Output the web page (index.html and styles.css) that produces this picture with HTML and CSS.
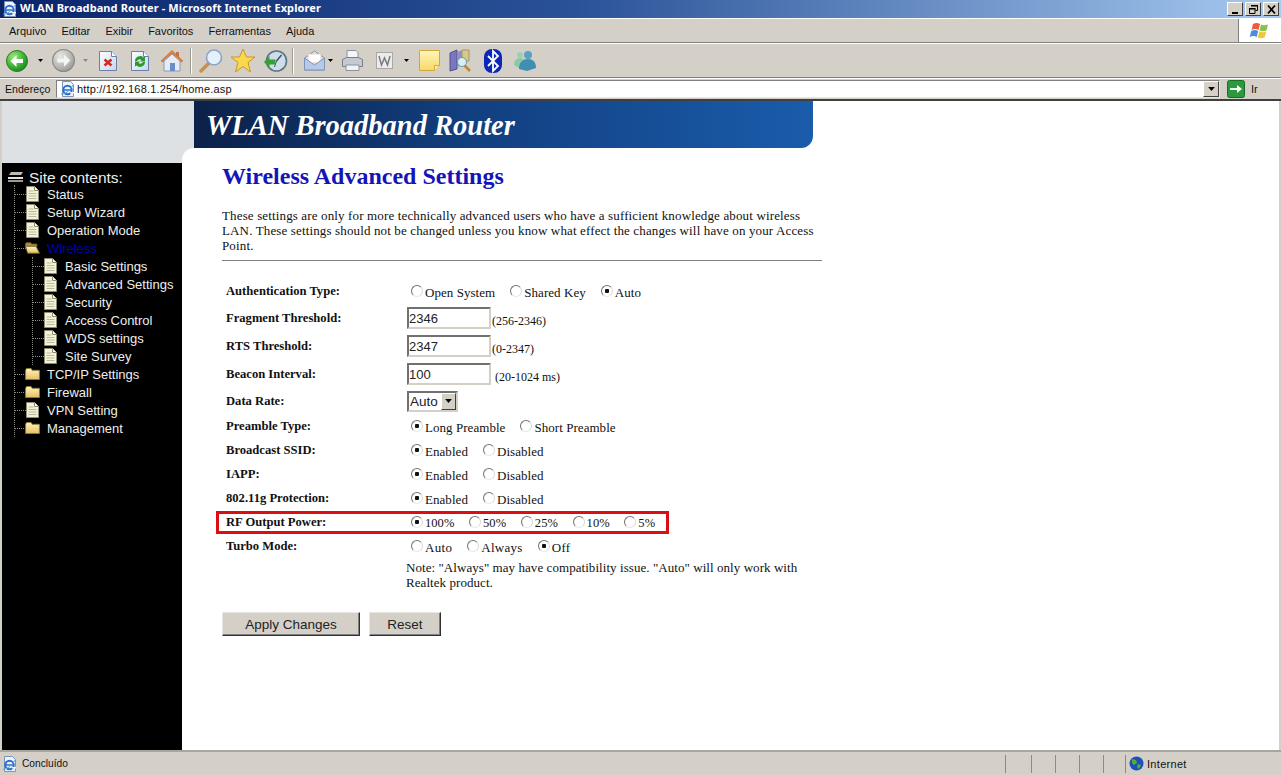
FILE: index.html
```html
<!DOCTYPE html>
<html lang="pt">
<head>
    <meta charset="UTF-8">
    <title>WLAN Broadband Router - Microsoft Internet Explorer</title>
    <link rel="stylesheet" href="styles.css">
</head>
<body>
<svg class="defs" width="0" height="0">
    <defs>
        <radialGradient id="gGreen" cx=".35" cy=".3" r=".8"><stop offset="0" stop-color="#9ce87c"/><stop offset=".6" stop-color="#3cb034"/><stop offset="1" stop-color="#14801a"/></radialGradient>
        <radialGradient id="gGrey" cx=".35" cy=".3" r=".8"><stop offset="0" stop-color="#e8e8e4"/><stop offset=".7" stop-color="#b0b0ac"/><stop offset="1" stop-color="#8f8f8b"/></radialGradient>
        <linearGradient id="gPage" x1="0" y1="0" x2="1" y2="1"><stop offset="0" stop-color="#ffffff"/><stop offset="1" stop-color="#c5d5ee"/></linearGradient>
        <linearGradient id="gNote" x1="0" y1="0" x2="0" y2="1"><stop offset="0" stop-color="#fff6b8"/><stop offset="1" stop-color="#f7d868"/></linearGradient>
        <linearGradient id="gFolder" x1="0" y1="0" x2="0" y2="1"><stop offset="0" stop-color="#fff4c0"/><stop offset="1" stop-color="#e8c060"/></linearGradient>
        <symbol id="tree-doc" viewBox="0 0 13 16">
            <path d="M.5.5h8l4 4v11H.5z" fill="#f5f2d8" stroke="#8a8a70"/>
            <path d="M8.500.5v4h4" fill="#fff" stroke="#8a8a70"/>
            <path d="M2.500 5h5M2.500 7.500h8M2.500 10h8M2.500 12.500h8" stroke="#b8b89c"/>
        </symbol>
        <symbol id="tree-folder" viewBox="0 0 16 13">
            <path d="M.5 2.500l1-2h5l1 2h8v10H.5z" fill="url(#gFolder)" stroke="#8a7a3c"/>
        </symbol>
        <symbol id="tree-open" viewBox="0 0 17 13">
            <path d="M.5 2l1-1.500h5l1 1.500h6v3H.5z" fill="#a89048" stroke="#6a5c28"/>
            <path d="M.5 4.500h12l4 8H3z" fill="url(#gFolder)" stroke="#6a5c28"/>
        </symbol>
        <symbol id="ie-page" viewBox="0 0 16 16">
            <path d="M2.500.5h8l3 3v12h-11z" fill="#eef3fb" stroke="#7f93b5"/>
            <circle cx="7.500" cy="9" r="4.200" fill="none" stroke="#2a6fd0" stroke-width="2"/>
            <path d="M3.500 9h8" stroke="#2a6fd0" stroke-width="1.500"/>
            <path d="M10 11h4v1.500h-4z" fill="#eef3fb"/>
            <path d="M1 13c3 1 9-3 12-9" fill="none" stroke="#5fa0e8"/>
        </symbol>
        <symbol id="drop-arrow" viewBox="0 0 5 3"><path d="M0 0h5L2.500 3z"/></symbol>
    </defs>
</svg>

<div class="window">
    <div class="titlebar">
        <svg width="16" height="16"><use href="#ie-page"/></svg>
        <span class="title-text">WLAN Broadband Router - Microsoft Internet Explorer</span>
        <div class="win-buttons">
            <span class="win-btn"><svg width="13" height="11"><path d="M3 8h6v2H3z"/></svg></span>
            <span class="win-btn"><svg width="13" height="11"><path d="M4.500 1.500h6v5h-2M2.500 4.500h5.500v5h-5.500z" fill="none" stroke="#000"/><path d="M4 1h7v1.500H4zM2 4h6.500v1.500H2z"/></svg></span>
            <span class="win-btn"><svg width="13" height="11"><path d="M3 1.500l7 8M10 1.500l-7 8" stroke="#000" stroke-width="1.800"/></svg></span>
        </div>
    </div>

    <div class="menubar">
        <nav class="menu">
            <span>Arquivo</span><span>Editar</span><span>Exibir</span><span>Favoritos</span><span>Ferramentas</span><span>Ajuda</span>
        </nav>
        <div class="flag-box">
            <svg width="22" height="20" viewBox="0 0 22 20">
                <path d="M4 3c3-1.500 5-1 7 0l-1.500 6c-2-1-4-1.500-7 0z" fill="#e8603a"/>
                <path d="M12 3.500c2 1 4 1 7 0L17.500 9.500c-3 1-5 1-7 0z" fill="#8cc04c"/>
                <path d="M2.200 10c3-1.500 5-1 7 0L7.700 16c-2-1-4-1.500-7 0z" fill="#4c8ce0"/>
                <path d="M10.200 10.500c2 1 4 1 7 0L15.700 16.500c-3 1-5 1-7 0z" fill="#f0c838"/>
            </svg>
        </div>
    </div>

    <div class="toolbar">
        <span class="tool"><svg width="22" height="22" viewBox="0 0 22 22"><circle cx="11" cy="11" r="10.500" fill="url(#gGreen)" stroke="#2a7a24"/><path d="M4.500 11l6-6v4H17v4h-6.500v4z" fill="#fff"/></svg></span>
        <span class="arrow arrow-a"><svg width="5" height="3"><use href="#drop-arrow"/></svg></span>
        <span class="tool"><svg width="23" height="23" viewBox="0 0 22 22"><circle cx="11" cy="11" r="10.500" fill="url(#gGrey)" stroke="#8a8a86"/><path d="M17.500 11l-6-6v4H5v4h6.500v4z" fill="#f4f4f2"/></svg></span>
        <span class="arrow arrow-b"><svg width="5" height="3" fill="#8a8a86"><use href="#drop-arrow"/></svg></span>
        <span class="tool"><svg width="20" height="22" viewBox="0 0 20 22"><path d="M1.500 1.500h12l5 5v14h-17z" fill="url(#gPage)" stroke="#6a80a8"/><path d="M13.500 1.500v5h5" fill="#fff" stroke="#6a80a8"/><path d="M6.500 9.500l7 6M13.500 9.500l-7 6" stroke="#d8281c" stroke-width="2.600"/></svg></span>
        <span class="tool"><svg width="20" height="22" viewBox="0 0 20 22"><path d="M1.500 1.500h12l5 5v14h-17z" fill="url(#gPage)" stroke="#6a80a8"/><path d="M13.500 1.500v5h5" fill="#fff" stroke="#6a80a8"/><path d="M5 11a5 5 0 0 1 8.500-3.500l1.500-1v5h-5l1.500-1.500A3 3 0 0 0 7 11z" fill="#2a9a2c"/><path d="M15 12a5 5 0 0 1-8.500 3.500l-1.500 1v-5h5l-1.500 1.500A3 3 0 0 0 13 12z" fill="#2a9a2c"/></svg></span>
        <span class="tool"><svg width="24" height="24" viewBox="0 0 24 24"><path d="M16 3h3v6h-3z" fill="#b87858"/><path d="M1 12L12 1.500 23 12l-2 1L12 5 3 13z" fill="#e8803a" stroke="#b8602c" stroke-width=".6"/><path d="M4 12l8-7 8 7v10H4z" fill="#e6ecf6" stroke="#8a9ab8"/><path d="M10 14h5v8h-5z" fill="#6a8cc8"/></svg></span>
        <span class="tool-sep tool-sep-a"></span>
        <span class="tool"><svg width="25" height="25" viewBox="0 0 25 25"><path d="M10 15L2 23" stroke="#c89048" stroke-width="3.500" stroke-linecap="round"/><circle cx="15" cy="9.500" r="7.500" fill="#e4f0fb" stroke="#8aa4c4" stroke-width="1.600"/></svg></span>
        <span class="tool"><svg width="26" height="25" viewBox="0 0 26 25"><path d="M13 1l3.500 8H25l-7 5.500L20.500 24 13 18.500 5.500 24 8 14.500 1 9h8.500z" fill="#fbd94c" stroke="#c8962c"/></svg></span>
        <span class="tool"><svg width="25" height="24" viewBox="0 0 25 24"><circle cx="13.500" cy="12" r="10" fill="#cfdde8" stroke="#5a7488" stroke-width="1.600"/><path d="M13.500 12l5-6" stroke="#3a5468" stroke-width="1.500"/><path d="M13.500 12l-2 6" stroke="#3a5468"/><path d="M1 13l5.500-6v3.500h6v5h-6V19z" fill="#38a032"/></svg></span>
        <span class="tool-sep tool-sep-b"></span>
        <span class="tool"><svg width="23" height="24" viewBox="0 0 23 24"><path d="M1.500 9L11.500 2l10 7v12h-20z" fill="#dfe6f5" stroke="#7f93b5"/><path d="M5 5h13v9H5z" fill="#fff" stroke="#d8b890" stroke-width=".6"/><path d="M1.500 9l10 7 10-7v12h-20z" fill="#b8c8ea" stroke="#7f93b5"/></svg></span>
        <span class="arrow arrow-c"><svg width="5" height="3"><use href="#drop-arrow"/></svg></span>
        <span class="tool"><svg width="23" height="23" viewBox="0 0 23 23"><path d="M6 1.500h9l2 2v6H6z" fill="#f4f6fa" stroke="#8a929e"/><path d="M1.500 10.500l4-2h12l4 2v7h-20z" fill="#c6cad0" stroke="#7a8088"/><path d="M5 16h13v5.500H5z" fill="#f2f2f2" stroke="#8a929e"/></svg></span>
        <span class="tool"><svg width="17" height="17" viewBox="0 0 17 17"><rect x=".5" y=".5" width="16" height="16" fill="#ececec" stroke="#a8a8a8"/><path d="M3 4l2.500 9L8.500 6l3 7L14 4" fill="none" stroke="#7c7c7c" stroke-width="1.500"/></svg></span>
        <span class="arrow arrow-d"><svg width="5" height="3"><use href="#drop-arrow"/></svg></span>
        <span class="tool"><svg width="23" height="23" viewBox="0 0 23 23"><path d="M1.500 1.500h20v15l-5 5h-15z" fill="url(#gNote)" stroke="#d4a838"/><path d="M16.500 21.500v-5h5" fill="#fff2a8" stroke="#d4a838"/></svg></span>
        <span class="tool"><svg width="24" height="24" viewBox="0 0 24 24"><path d="M1 4l7-3v19l-7 2z" fill="#7878c0" stroke="#50508c"/><path d="M8 3l6-2v12l-6 6z" fill="#9090c8"/><path d="M13 1h7v11h-7z" fill="#d8c890" stroke="#a89858"/><path d="M15 16l6 6" stroke="#b88838" stroke-width="2.500"/><circle cx="13" cy="13" r="4.500" fill="#d8f0f4" stroke="#6a98a8"/></svg></span>
        <span class="tool"><svg width="18" height="24" viewBox="0 0 18 24"><rect width="18" height="24" rx="8" fill="#0a28b8"/><path d="M4 7l10 10-5 5V2l5 5L4 17" fill="none" stroke="#fff" stroke-width="1.800"/></svg></span>
        <span class="tool"><svg width="26" height="22" viewBox="0 0 26 22"><circle cx="8" cy="5" r="3" fill="#9ccfb0"/><path d="M2 15c0-5 3-7 6-7s5 2 5 6l-6 4z" fill="#8cc8a8"/><circle cx="16" cy="5" r="4" fill="#5aa0c0"/><path d="M7 19c0-7 4-10 9-10s8 3 8 9l-9 3z" fill="#3f8fb0"/></svg></span>
    </div>

    <div class="addressbar">
        <span class="addr-label">Endereço</span>
        <div class="addr-box">
            <svg width="16" height="16"><use href="#ie-page"/></svg>
            <span class="addr-url">http://192.168.1.254/home.asp</span>
            <span class="addr-drop"><svg width="7" height="4" viewBox="0 0 5 3"><path d="M0 0h5L2.500 3z"/></svg></span>
        </div>
        <svg class="go-icon" width="18" height="18" viewBox="0 0 18 18"><rect x=".5" y=".5" width="17" height="17" rx="2" fill="#2a9a3c" stroke="#1a6a28"/><path d="M3 8h7V5l5 4-5 4v-3H3z" fill="#fff"/></svg>
        <span class="go-label">Ir</span>
    </div>

    <div class="page">
        <div class="head">
            <div class="head-blank"></div>
            <div class="banner">WLAN Broadband Router</div>
        </div>
        <div class="below">
            <aside class="sidebar">
                <div class="tree-root">
                    <svg width="16" height="13" viewBox="0 0 16 13"><path d="M3 1h12L13 4H1z" fill="#bdbdb4"/><path d="M0 6h15v2H0z" fill="#e4e4dc"/><path d="M0 9h15v2H0z" fill="#9a9a92"/></svg>
                    <span>Site contents:</span>
                </div>
                <ul class="tree">
                    <li><div class="node"><svg class="ico" width="13" height="16"><use href="#tree-doc"/></svg><span>Status</span></div></li>
                    <li><div class="node"><svg class="ico" width="13" height="16"><use href="#tree-doc"/></svg><span>Setup Wizard</span></div></li>
                    <li><div class="node"><svg class="ico" width="13" height="16"><use href="#tree-doc"/></svg><span>Operation Mode</span></div></li>
                    <li>
                        <div class="node node-active"><svg class="ico ico-open" width="15" height="12"><use href="#tree-open"/></svg><span>Wireless</span></div>
                        <ul class="tree tree-sub">
                            <li><div class="node"><svg class="ico" width="13" height="16"><use href="#tree-doc"/></svg><span>Basic Settings</span></div></li>
                            <li><div class="node"><svg class="ico" width="13" height="16"><use href="#tree-doc"/></svg><span>Advanced Settings</span></div></li>
                            <li><div class="node"><svg class="ico" width="13" height="16"><use href="#tree-doc"/></svg><span>Security</span></div></li>
                            <li><div class="node"><svg class="ico" width="13" height="16"><use href="#tree-doc"/></svg><span>Access Control</span></div></li>
                            <li><div class="node"><svg class="ico" width="13" height="16"><use href="#tree-doc"/></svg><span>WDS settings</span></div></li>
                            <li><div class="node"><svg class="ico" width="13" height="16"><use href="#tree-doc"/></svg><span>Site Survey</span></div></li>
                        </ul>
                    </li>
                    <li><div class="node"><svg class="ico ico-folder" width="15" height="12"><use href="#tree-folder"/></svg><span>TCP/IP Settings</span></div></li>
                    <li><div class="node"><svg class="ico ico-folder" width="15" height="12"><use href="#tree-folder"/></svg><span>Firewall</span></div></li>
                    <li><div class="node"><svg class="ico" width="13" height="16"><use href="#tree-doc"/></svg><span>VPN Setting</span></div></li>
                    <li><div class="node"><svg class="ico ico-folder" width="15" height="12"><use href="#tree-folder"/></svg><span>Management</span></div></li>
                </ul>
            </aside>

            <main class="content">
                <h1>Wireless Advanced Settings</h1>
                <p class="intro">These settings are only for more technically advanced users who have a sufficient knowledge about wireless<br>LAN. These settings should not be changed unless you know what effect the changes will have on your Access<br>Point.</p>
                <hr>
                <form class="settings">
                    <div class="row row-auth">
                        <label>Authentication Type:</label>
                        <div class="radios"><input type="radio" name="auth"><span>Open System</span><input type="radio" name="auth"><span>Shared Key</span><input type="radio" name="auth" checked><span>Auto</span></div>
                    </div>
                    <div class="row row-input">
                        <label>Fragment Threshold:</label>
                        <div class="field"><input type="text" value="2346"><span class="hint">(256-2346)</span></div>
                    </div>
                    <div class="row row-input">
                        <label>RTS Threshold:</label>
                        <div class="field"><input type="text" value="2347"><span class="hint">(0-2347)</span></div>
                    </div>
                    <div class="row row-input">
                        <label>Beacon Interval:</label>
                        <div class="field"><input type="text" value="100"><span class="hint hint-wide">(20-1024 ms)</span></div>
                    </div>
                    <div class="row row-select">
                        <label>Data Rate:</label>
                        <div class="field"><div class="select"><span>Auto</span><span class="select-btn"><svg width="7" height="4" viewBox="0 0 5 3"><path d="M0 0h5L2.500 3z"/></svg></span></div></div>
                    </div>
                    <div class="row">
                        <label>Preamble Type:</label>
                        <div class="radios"><input type="radio" name="pre" checked><span>Long Preamble</span><input type="radio" name="pre"><span>Short Preamble</span></div>
                    </div>
                    <div class="row">
                        <label>Broadcast SSID:</label>
                        <div class="radios"><input type="radio" name="ssid" checked><span>Enabled</span><input type="radio" name="ssid"><span>Disabled</span></div>
                    </div>
                    <div class="row">
                        <label>IAPP:</label>
                        <div class="radios"><input type="radio" name="iapp" checked><span>Enabled</span><input type="radio" name="iapp"><span>Disabled</span></div>
                    </div>
                    <div class="row">
                        <label>802.11g Protection:</label>
                        <div class="radios"><input type="radio" name="prot" checked><span>Enabled</span><input type="radio" name="prot"><span>Disabled</span></div>
                    </div>
                    <div class="row row-marked">
                        <label>RF Output Power:</label>
                        <div class="radios"><input type="radio" name="rf" checked><span>100%</span><input type="radio" name="rf"><span>50%</span><input type="radio" name="rf"><span>25%</span><input type="radio" name="rf"><span>10%</span><input type="radio" name="rf"><span>5%</span></div>
                    </div>
                    <div class="row row-turbo">
                        <label>Turbo Mode:</label>
                        <div class="radios"><input type="radio" name="turbo"><span>Auto</span><input type="radio" name="turbo"><span>Always</span><input type="radio" name="turbo" checked><span>Off</span></div>
                    </div>
                    <p class="note">Note: "Always" may have compatibility issue. "Auto" will only work with<br>Realtek product.</p>
                    <div class="actions">
                        <button type="button" class="btn-apply">Apply Changes</button>
                        <button type="button" class="btn-reset">Reset</button>
                    </div>
                </form>
            </main>
        </div>
    </div>

    <div class="statusbar">
        <svg width="16" height="16"><use href="#ie-page"/></svg>
        <span class="status-text">Concluído</span>
        <span class="panel panel-a"></span>
        <span class="panel panel-b"></span>
        <span class="panel panel-b"></span>
        <span class="panel panel-b"></span>
        <span class="panel panel-c"></span>
        <span class="panel panel-zone">
            <svg width="15" height="15" viewBox="0 0 15 15"><circle cx="7.500" cy="7.500" r="7" fill="#1f4fb8"/><path d="M3 3l4 1 1 3-3 2-2-2zM9 8l3 1-2 4-2-2z" fill="#4fae3c"/></svg>
            <span>Internet</span>
        </span>
    </div>
</div>
</body>
</html>
```

FILE: styles.css
```css
html, body { margin: 0; height: 100%; overflow: hidden; }
body { background: #d4d0c8; font-family: "Liberation Sans", Arial, sans-serif; }
.defs { position: absolute; }
svg { display: block; flex: none; }

.window { height: 775px; display: flex; flex-direction: column; }

/* title bar */
.titlebar {
    height: 18px; flex: none; display: flex; align-items: center; padding: 0 2px;
    background: linear-gradient(90deg, #0a246a 0%, #2a5298 45%, #a6caf0 100%);
}
.title-text { margin: -3px 0 0 2px; color: #fff; font: bold 11px "Noto Sans", sans-serif; letter-spacing: 0.1px; white-space: nowrap; }
.win-buttons { margin-left: auto; display: flex; }
.win-btn {
    width: 16px; height: 14px; margin-left: 2px; box-sizing: border-box; display: flex; align-items: center; justify-content: center;
    background: #d4d0c8; border: 1px solid; border-color: #fff #404040 #404040 #fff;
}

/* menu */
.menubar {
    height: 25px; flex: none; display: flex; box-sizing: border-box;
    border-top: 1px solid #fff; border-bottom: 1px solid #808080; padding-left: 2px;
}
.menu { display: flex; align-items: center; font: 11px "Liberation Sans", sans-serif; color: #111; }
.menu span { padding: 0 7px; margin-right: 1.2px; }
.flag-box {
    margin-left: auto; width: 42px; background: #fff; display: flex; align-items: center; justify-content: center;
    border-left: 1px solid #808080;
}

/* toolbar */
.toolbar {
    height: 35px; flex: none; box-sizing: border-box; display: flex; align-items: center; padding-left: 1px;
    border-top: 1px solid #fff; border-bottom: 1px solid #808080;
}
.tool { width: 32px; display: flex; justify-content: center; align-items: center; flex: none; }
.arrow { display: flex; justify-content: center; flex: none; }
.arrow-a { width: 14px; }
.arrow-b { width: 13px; }
.arrow-c { width: 8px; margin: 0 2px 0 -4px; }
.arrow-d { width: 12px; margin-right: 1px; }
.tool-sep { width: 1px; height: 26px; background: #9c9a92; border-right: 1px solid #fff; flex: none; }
.tool-sep-a { margin: 0 3px 0 2px; }
.tool-sep-b { margin: 0 4px 0 1px; }

/* address */
.addressbar {
    height: 23px; flex: none; box-sizing: border-box; display: flex; align-items: center; padding: 0 0 1px 5px;
    border-top: 1px solid #fff; border-bottom: 2px solid #404040; font-size: 11px; color: #111;
}
.addr-label { width: 51px; font-size: 10.600px; }
.addr-box {
    width: 1164px; height: 18px; box-sizing: border-box; background: #fff; display: flex; align-items: center; padding-left: 3px;
    border: 1px solid; border-color: #808080 #e8e8e8 #e8e8e8 #808080;
}
.addr-url { margin-left: 1px; letter-spacing: 0.19px; }
.addr-drop {
    margin-left: auto; width: 16px; height: 16px; box-sizing: border-box; background: #d4d0c8; display: flex; align-items: center; justify-content: center;
    border: 1px solid; border-color: #fff #404040 #404040 #fff;
}
.go-icon { margin-left: 7px; }
.go-label { margin-left: 6px; }

/* router page */
.page { flex: 1; min-height: 0; display: flex; flex-direction: column; margin: 0 2px; background: #fff; color: #000; }
.head { height: 47px; flex: none; display: flex; background: #fff; }
.head-blank { width: 192px; background: #dde1e4; }
.banner {
    width: 619px; box-sizing: border-box; padding: 2px 0 0 12px; border-bottom-right-radius: 12px; color: #fff;
    background: linear-gradient(90deg, #0b2149 0%, #123f80 45%, #1a5cab 100%);
    font: italic bold 28.500px/46px "Liberation Serif", serif; white-space: nowrap;
}
.below { flex: 1; min-height: 0; display: flex; background: linear-gradient(#dde1e4 15px, #fff 15px); }

.sidebar {
    width: 180px; flex: none; margin-top: 15px; background: #000; box-sizing: border-box; padding: 7px 0 0 6px;
    font-size: 13px; color: #eee; white-space: nowrap;
}
.tree-root { display: flex; align-items: center; height: 15px; font-size: 15.500px; }
.tree-root span { margin-left: 5px; }
.tree, .tree li { list-style: none; margin: 0; padding: 0; }
.tree { margin: 0 0 9px 6px; border-left: 1px dotted #8a8a8a; }
.tree > li:last-child { margin-bottom: -9px; }
.node { height: 18px; display: flex; align-items: center; }
.node::before { content: ""; width: 11px; border-top: 1px dotted #8a8a8a; flex: none; }
.ico { margin-right: 8px; }
.ico-folder, .ico-open { margin: 0 7px 0 -1px; }
.node-active { color: #0000b0; }
.tree-sub { margin: 0 0 9px 17px; }

.content {
    flex: 1; background: #fff; border-top-left-radius: 12px; box-sizing: border-box; padding: 0 0 0 40px;
    font: 13px/15px "Liberation Serif", serif; color: #111;
}
h1 { margin: 0; padding-top: 13px; font: bold 24px/30px "Liberation Serif", serif; color: #1414b8; }
.intro { margin: 17px 0 0; white-space: nowrap; letter-spacing: 0.14px; }
hr { width: 600px; margin: 7px 0 0; border: 0; border-top: 1px solid #808080; height: 0; }

.settings { width: 600px; margin-top: 18px; }
.row { height: 24px; display: flex; align-items: center; padding-left: 4px; position: relative; }
.row label { width: 180px; flex: none; font-weight: bold; font-size: 12.600px; }
.row-auth { height: 25px; }
.row-input { height: 28px; }
.row-select { height: 26px; }
.radios { display: flex; align-items: center; padding-left: 5px; white-space: nowrap; letter-spacing: 0.05px; }
.radios input {
    appearance: none; width: 12px; height: 12px; margin: -1px 2px 0 0; border-radius: 50%; flex: none;
    background: #fff; border: 1px solid; border-color: #707070 #d8d8d8 #e8e8e8 #707070;
}
.radios input:checked { background: radial-gradient(circle, #111 0 2px, #fff 2.500px); }
.radios span { margin: 2px 15px 0 0; }
.row-marked .radios span { font-size: 12.500px; margin-right: 14.700px; }
.row-turbo .radios { letter-spacing: 0.3px; }
.field { display: flex; align-items: center; margin-left: 1px; }
.field input {
    width: 84px; height: 22px; box-sizing: border-box; padding: 0; background: #fff;
    font: 13px "Liberation Sans", sans-serif; color: #222; outline: none;
    border: 2px solid; border-color: #707070 #d4d0c8 #d4d0c8 #707070;
}
.hint { margin: 6px 0 0 1px; font-size: 12px; }
.hint-wide { margin-left: 4px; }
.select {
    width: 51px; height: 21px; box-sizing: border-box; display: flex; align-items: center; justify-content: space-between; padding-left: 1px;
    border: 2px solid; border-color: #707070 #d4d0c8 #d4d0c8 #707070;
    font: 13.500px "Liberation Sans", sans-serif; color: #222; background: #fff;
}
.select-btn {
    width: 15px; height: 17px; box-sizing: border-box; background: #d4d0c8; display: flex; align-items: center; justify-content: center;
    border: 1px solid; border-color: #fff #404040 #404040 #fff;
}
/* red box drawn round the row in the screenshot */
.row-marked::after {
    content: ""; position: absolute; left: -6px; top: 1px; width: 447px; height: 17px; border: 3px solid #d90f14; pointer-events: none;
}
.note { margin: 2px 0 0 184px; white-space: nowrap; letter-spacing: 0.06px; }
.actions { display: flex; gap: 9px; margin-top: 22px; }
.actions button {
    height: 24px; background: #d4d0c8; font: 13.500px "Liberation Sans", sans-serif; color: #222; padding: 0;
    border: 1px solid; border-color: #e8e6e0 #303030 #303030 #e8e6e0; box-shadow: inset -1px -1px 0 #808080;
}
.btn-apply { width: 138px; }
.btn-reset { width: 72px; }

/* status bar */
.statusbar {
    flex: none; height: 25px; box-sizing: border-box; display: flex; align-items: center; padding-left: 2px;
    border-top: 2px solid #a8a69e; font-size: 11px; color: #111;
}
.status-text { margin-left: 4px; margin-right: auto; font-size: 10.200px; }
.panel { height: 18px; box-sizing: border-box; border-left: 1px solid #8c8a82; flex: none; }
.panel-a { width: 26px; }
.panel-b { width: 24px; }
.panel-c { width: 22px; }
.panel-zone { width: 156px; display: flex; align-items: center; padding-left: 3px; }
.panel-zone span { margin-left: 3px; letter-spacing: 0.3px; }
```
